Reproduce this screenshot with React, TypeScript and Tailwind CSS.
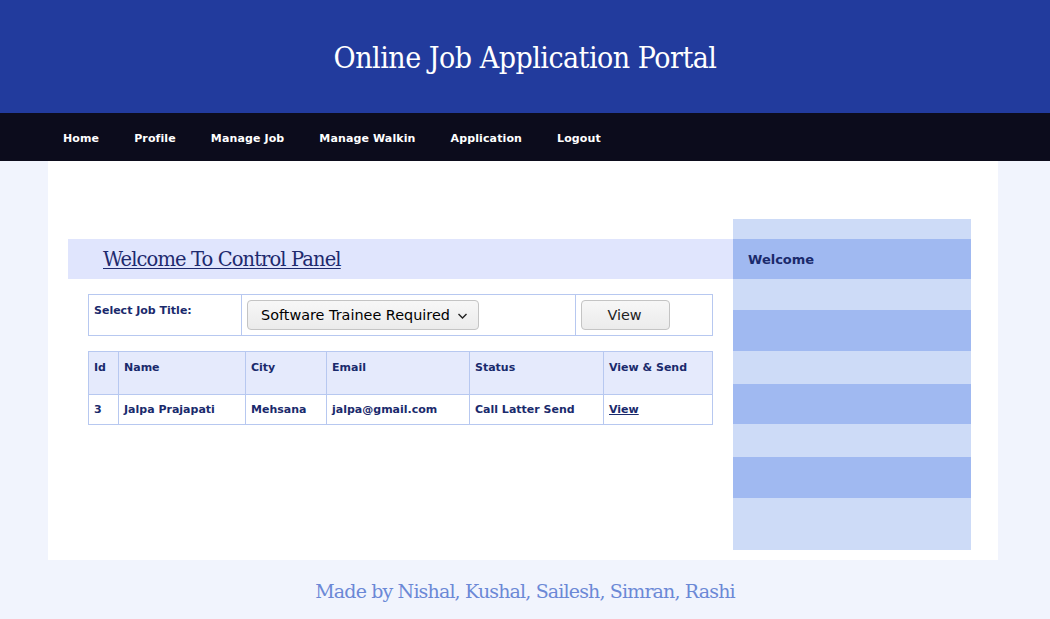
import React from 'react';

const navItems = ["Home", "Profile", "Manage Job", "Manage Walkin", "Application", "Logout"];

const stripes: { cls: string; label?: string }[] = [
  { cls: "h-[20px] bg-[#cddbf7]" },
  { cls: "h-[40px] bg-[#a0b9f1]", label: "Welcome" },
  { cls: "h-[31px] bg-[#cddbf7]" },
  { cls: "h-[41px] bg-[#a0b9f1]" },
  { cls: "h-[33px] bg-[#cddbf7]" },
  { cls: "h-[40px] bg-[#a0b9f1]" },
  { cls: "h-[33px] bg-[#cddbf7]" },
  { cls: "h-[41px] bg-[#a0b9f1]" },
  { cls: "h-[52px] bg-[#cddbf7]" },
];

export default function App() {
  return (
    <div className="min-h-[619px] bg-[#f1f4fd] font-['DejaVu_Sans',sans-serif]">
      <div className="h-[113px] bg-[#223b9d] flex items-center justify-center pt-[1px]">
        <h1 className="text-white text-[30px] font-['DejaVu_Serif',serif] tracking-[-0.5px] [font-stretch:condensed]">
          Online Job Application Portal
        </h1>
      </div>

      <div className="h-[48px] bg-[#0c0c1c] flex items-center pl-[63px] gap-[35px] pt-[4px]">
        {navItems.map((item) => (
          <a key={item} className="text-white text-[11px] font-bold tracking-[0.12px]">
            {item}
          </a>
        ))}
      </div>

      <div className="ml-[48px] mr-[52px] bg-white h-[399px] flex pt-[58px] pl-[20px]">
        <div className="flex-1 pt-[20px]">
          <div className="h-[40px] bg-[#e0e5fd] flex items-center pl-[35px] pt-[1px]">
            <span className="text-[19.5px] text-[#1e2a6e] underline underline-offset-2 font-['DejaVu_Serif',serif] tracking-[-0.9px]">
              Welcome To Control Panel
            </span>
          </div>

          <table className="ml-[20px] mt-[15px] w-[625px] border-collapse text-[11px] font-bold text-[#1a2a6c]">
            <tbody>
              <tr className="h-[41px]">
                <td className="w-[153px] border border-[#b7c8f0] align-top px-[5px] pt-[8px]">Select Job Title:</td>
                <td className="w-[334px] border border-[#b7c8f0] px-[5px]">
                  <div className="w-[232px] h-[30px] rounded-[4px] border border-[#c4c4c4] bg-gradient-to-b from-[#f7f7f7] to-[#ebebeb] flex items-center pl-[13px] gap-[7px] pt-[1px] text-[14.4px] font-normal text-black">
                    Software Trainee Required
                    <svg width="11" height="10" viewBox="0 0 11 10">
                      <path d="M1.5 3 L5.5 7 L9.5 3" stroke="#222" strokeWidth="1.4" fill="none" />
                    </svg>
                  </div>
                </td>
                <td className="border border-[#b7c8f0] px-[5px]">
                  <div className="w-[89px] h-[30px] rounded-[4px] border border-[#c4c4c4] bg-gradient-to-b from-[#f7f7f7] to-[#ebebeb] flex items-center justify-center pt-[1px] pr-[2px] text-[14.4px] font-normal text-[#222]">
                    View
                  </div>
                </td>
              </tr>
            </tbody>
          </table>

          <table className="ml-[20px] mt-[15px] w-[625px] border-collapse text-[11px] font-bold text-[#1a2a6c]">
            <thead>
              <tr className="h-[43px] bg-[#e5eafc] text-left">
                <th className="w-[30px] border border-[#b7c8f0] align-top px-[5px] pt-[8px]">Id</th>
                <th className="w-[127px] border border-[#b7c8f0] align-top px-[5px] pt-[8px]">Name</th>
                <th className="w-[81px] border border-[#b7c8f0] align-top px-[5px] pt-[8px]">City</th>
                <th className="w-[143px] border border-[#b7c8f0] align-top px-[5px] pt-[8px]">Email</th>
                <th className="w-[134px] border border-[#b7c8f0] align-top px-[5px] pt-[8px]">Status</th>
                <th className="border border-[#b7c8f0] align-top px-[5px] pt-[8px]">View &amp; Send</th>
              </tr>
            </thead>
            <tbody>
              <tr className="h-[30px]">
                <td className="border border-[#b7c8f0] px-[5px] pt-[2px]">3</td>
                <td className="border border-[#b7c8f0] px-[5px] pt-[2px]">Jalpa Prajapati</td>
                <td className="border border-[#b7c8f0] px-[5px] pt-[2px]">Mehsana</td>
                <td className="border border-[#b7c8f0] px-[5px] pt-[2px]">jalpa@gmail.com</td>
                <td className="border border-[#b7c8f0] px-[5px] pt-[2px]">Call Latter Send</td>
                <td className="border border-[#b7c8f0] px-[5px] pt-[2px]">
                  <a className="underline">View</a>
                </td>
              </tr>
            </tbody>
          </table>
        </div>

        <div className="w-[238px] mr-[27px] flex flex-col">
          {stripes.map((s, i) => (
            <div key={i} className={`${s.cls} flex items-center pl-[15px] pt-[1px]`}>
              {s.label && <span className="text-[13px] font-bold text-[#1a2a6c]">{s.label}</span>}
            </div>
          ))}
        </div>
      </div>

      <div className="h-[59px] flex items-center justify-center pt-[4px]">
        <span className="text-[19px] text-[#6b88d6] font-['DejaVu_Serif',serif] tracking-[-0.85px]">
          Made by Nishal, Kushal, Sailesh, Simran, Rashi
        </span>
      </div>
    </div>
  );
}
